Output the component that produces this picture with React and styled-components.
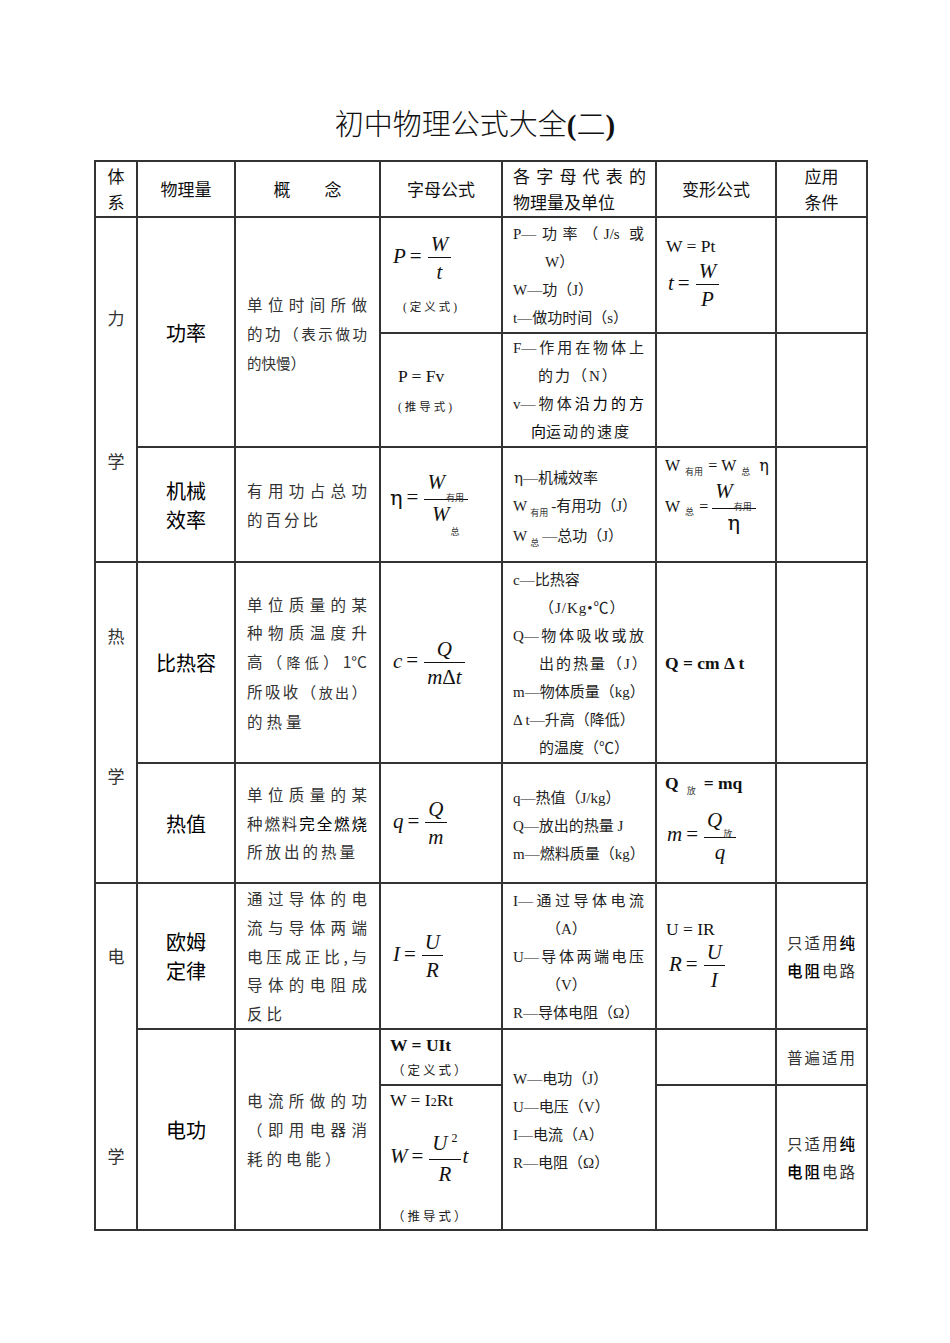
import React from 'react';
import styled, { createGlobalStyle } from 'styled-components';

const GlobalStyle = createGlobalStyle`
  html, body { margin: 0; padding: 0; background: #fff; }
  body { font-family: "Liberation Serif", "Noto Sans CJK SC", serif; color: #222; }
`;

const Page = styled.div`
  width: 950px;
  min-height: 1343px;
  padding-top: 105px;
  box-sizing: border-box;
`;

const Title = styled.h1`
  margin: 0 0 15px 0;
  text-align: center;
  font-family: "Liberation Serif", "Noto Sans CJK SC", serif;
  font-weight: 300;
  font-size: 29px;
  line-height: 40px;
  color: #111;
`;

const Paren = styled.span`
  font-weight: bold;
`;

const Table = styled.table`
  margin-left: 94px;
  width: 772px;
  border-collapse: collapse;
  table-layout: fixed;
`;

const Col = styled.col`
  width: ${p => p.$w}px;
`;

const Row = styled.tr`
  height: ${p => p.$h}px;
`;

const Cell = styled.td`
  border: 2px solid #333;
  padding: ${p => p.$pt || 0}px ${p => (p.$pr ?? p.$pad ?? 10)}px ${p => p.$pb || 0}px ${p => p.$pad ?? 10}px;
  vertical-align: middle;
  text-align: ${p => p.$align || 'left'};
`;

const HeadCell = styled(Cell)`
  font-family: "Noto Sans CJK SC", sans-serif;
  font-size: 17px;
  line-height: 26px;
  color: #111;
`;

const HeadLine = styled.div`
  text-align: ${p => (p.$justify ? 'justify' : 'inherit')};
  text-align-last: ${p => (p.$justify ? 'justify' : 'auto')};
`;

const SysCell = styled(Cell)`
  padding: 0;
`;

const Sys = styled.div`
  display: flex;
  flex-direction: column;
  align-items: center;
  gap: ${p => p.$gap}px;
  padding-bottom: ${p => p.$shift || 0}px;
  font-family: "Noto Sans CJK SC", sans-serif;
  font-size: 17px;
  line-height: 20px;
  color: #333;
`;

const QtyCell = styled(Cell)`
  text-align: center;
  font-family: "Noto Sans CJK SC", sans-serif;
  font-size: 20px;
  line-height: 29px;
  color: #000;
`;

const ConceptCell = styled(Cell)`
  font-family: "Noto Sans CJK SC", sans-serif;
  font-size: 15.5px;
  line-height: 28.8px;
  color: #333;
`;

const CLine = styled.div`
  white-space: nowrap;
  text-align: ${p => (p.$justify ? 'justify' : 'left')};
  text-align-last: ${p => (p.$justify ? 'justify' : 'auto')};
  letter-spacing: ${p => (p.$justify ? 0 : p.$ls ?? 4)}px;
`;

const Dark = styled.span`
  color: #000;
  letter-spacing: 0;
`;

const Small = styled.span`
  font-size: ${p => p.$size || 13}px;
  letter-spacing: 0;
`;

const SymCell = styled(Cell)`
  font-family: "Liberation Serif", "Noto Sans CJK SC", serif;
  font-size: 15px;
  line-height: 28px;
  color: #222;
`;

const SLine = styled.div`
  white-space: nowrap;
  padding-left: ${p => p.$indent || 0}px;
  text-align: ${p => (p.$justify ? 'justify' : 'left')};
  text-align-last: ${p => (p.$justify ? 'justify' : 'auto')};
  letter-spacing: ${p => p.$ls || 0}px;
`;

const FormulaCell = styled(Cell)`
  font-family: "Liberation Serif", serif;
  color: #111;
`;

const Stack = styled.div`
  display: flex;
  flex-direction: column;
  align-items: flex-start;
  gap: ${p => p.$gap || 0}px;
`;

const Plain = styled.div`
  font-family: "Liberation Serif", serif;
  font-size: 17.5px;
  line-height: 24px;
  font-weight: ${p => (p.$bold ? 'bold' : 'normal')};
  margin-left: ${p => p.$ml || 0}px;
  margin-top: ${p => p.$mt || 0}px;
  white-space: nowrap;
  color: #111;
`;

const Note = styled.div`
  font-family: "Liberation Serif", "Noto Sans CJK SC", serif;
  font-size: 12.5px;
  line-height: 20px;
  letter-spacing: 3px;
  margin-left: ${p => p.$ml || 0}px;
  margin-top: ${p => p.$mt || 0}px;
  white-space: nowrap;
  color: #222;
`;

const Math = styled.div`
  font-family: "Liberation Serif", serif;
  font-style: italic;
  font-size: 21px;
  line-height: 24px;
  margin-left: ${p => p.$ml || 0}px;
  margin-top: ${p => p.$mt || 0}px;
  white-space: nowrap;
  color: #111;
`;

const Op = styled.span`
  font-style: normal;
  margin: 0 4px;
`;

const Up = styled.span`
  font-style: normal;
`;

const Frac = styled.span`
  display: inline-flex;
  flex-direction: column;
  align-items: center;
  vertical-align: middle;
  margin: 0 2px;
`;

const Num = styled.span`
  line-height: 22px;
  padding: 0 3px 2px;
  white-space: nowrap;
`;

const Den = styled.span`
  align-self: stretch;
  text-align: center;
  line-height: 22px;
  padding: 3px 3px 0;
  border-top: 1.3px solid #111;
  white-space: nowrap;
`;

const Sub = styled.span`
  font-family: "Noto Sans CJK SC", sans-serif;
  font-style: normal;
  font-weight: normal;
  font-size: ${p => p.$size || 9}px;
  position: relative;
  top: ${p => p.$dy ?? 6}px;
  margin: 0 ${p => p.$mx ?? 3}px;
  color: #333;
`;

const Sup = styled.span`
  font-style: normal;
  font-size: 12px;
  position: relative;
  top: -8px;
  margin-left: 4px;
`;

const Eta = styled.span`
  font-style: normal;
  font-family: "DejaVu Serif", "Liberation Serif", serif;
`;

const VarCell = styled(Cell)`
  font-family: "Liberation Serif", serif;
  color: #111;
`;

const AppCell = styled(Cell)`
  font-family: "Noto Sans CJK SC", sans-serif;
  font-size: 15.5px;
  line-height: 28px;
  letter-spacing: 2px;
  white-space: nowrap;
  color: #333;
`;

const Strong = styled.span`
  color: #000;
  font-weight: 500;
`;

export default function App() {
  return (
    <Page>
      <GlobalStyle />
      <Title>
        初中物理公式大全<Paren>(</Paren>二<Paren>)</Paren>
      </Title>
      <Table>
        <colgroup>
          <Col $w={42} />
          <Col $w={98} />
          <Col $w={145} />
          <Col $w={122} />
          <Col $w={154} />
          <Col $w={120} />
          <Col $w={91} />
        </colgroup>
        <tbody>
          <Row $h={56}>
            <HeadCell $align="center" $pad={0}>
              <div>体</div>
              <div>系</div>
            </HeadCell>
            <HeadCell $align="center">物理量</HeadCell>
            <HeadCell $align="center">概　　念</HeadCell>
            <HeadCell $align="center">字母公式</HeadCell>
            <HeadCell $pad={10} $pr={9}>
              <HeadLine $justify>各字母代表的</HeadLine>
              <HeadLine>物理量及单位</HeadLine>
            </HeadCell>
            <HeadCell $align="center">变形公式</HeadCell>
            <HeadCell $align="center">
              <div>应用</div>
              <div>条件</div>
            </HeadCell>
          </Row>

          {/* 功率 - 定义式 */}
          <Row $h={116}>
            <SysCell rowSpan={3}>
              <Sys $gap={123}>
                <span>力</span>
                <span>学</span>
              </Sys>
            </SysCell>
            <QtyCell rowSpan={2}>功率</QtyCell>
            <ConceptCell rowSpan={2} $pad={11} $pr={12} $pt={4}>
              <CLine $justify>单位时间所做</CLine>
              <CLine $justify>
                的功（<Small $size={14.5}>表示做功</Small>
              </CLine>
              <CLine $ls={0}>
                <Small $size={14.5}>的快慢</Small>）
              </CLine>
            </ConceptCell>
            <FormulaCell $pad={12}>
              <Stack $gap={14}>
                <Math>
                  P<Op>=</Op>
                  <Frac>
                    <Num>W</Num>
                    <Den>t</Den>
                  </Frac>
                </Math>
                <Note $ml={10} style={{ fontSize: '11.5px' }}>
                  (定义式)
                </Note>
              </Stack>
            </FormulaCell>
            <SymCell $pad={10} $pr={11} $pt={2}>
              <SLine $justify>P—功率（J/s 或</SLine>
              <SLine $indent={32}>W）</SLine>
              <SLine>W—功（J）</SLine>
              <SLine>t—做功时间（s）</SLine>
            </SymCell>
            <VarCell $pad={9} $pb={6}>
              <Stack $gap={2}>
                <Plain>W = Pt</Plain>
                <Math $ml={2}>
                  t<Op>=</Op>
                  <Frac>
                    <Num>W</Num>
                    <Den>P</Den>
                  </Frac>
                </Math>
              </Stack>
            </VarCell>
            <AppCell />
          </Row>

          {/* 功率 - 推导式 */}
          <Row $h={114}>
            <FormulaCell $pad={17}>
              <Stack $gap={9}>
                <Plain>P = Fv</Plain>
                <Note $ml={0} style={{ fontSize: '11.5px' }}>
                  (推导式)
                </Note>
              </Stack>
            </FormulaCell>
            <SymCell $pad={10} $pr={11}>
              <SLine $justify>F—作用在物体上</SLine>
              <SLine $indent={25} $ls={2}>的力（N）</SLine>
              <SLine $justify>
                v—物体<Dark>沿力的方</Dark>
              </SLine>
              <SLine $indent={18} $ls={2}>
                <Dark>向</Dark>运动的速度
              </SLine>
            </SymCell>
            <VarCell />
            <AppCell />
          </Row>

          {/* 机械效率 */}
          <Row $h={115}>
            <QtyCell>
              <div>机械</div>
              <div>效率</div>
            </QtyCell>
            <ConceptCell $pad={11} $pr={12}>
              <CLine $justify>有用功占总功</CLine>
              <CLine $ls={3}>的百分比</CLine>
            </ConceptCell>
            <FormulaCell $pad={9} $pb={10}>
              <Math>
                <Eta>η</Eta>
                <Op>=</Op>
                <Frac>
                  <Num>
                    W
                    <Sub $dy={12} $mx={1}>
                      有用
                    </Sub>
                  </Num>
                  <Den>
                    W
                    <Sub $dy={14} $mx={1}>
                      总
                    </Sub>
                  </Den>
                </Frac>
              </Math>
            </FormulaCell>
            <SymCell $pad={11} $pt={7}>
              <SLine>
                <Eta>η</Eta>—机械效率
              </SLine>
              <SLine style={{ marginLeft: '-1px' }}>
                W<Sub $dy={5}>有用</Sub>-有用功（J）
              </SLine>
              <SLine style={{ marginLeft: '-1px' }}>
                W<Sub $dy={5}>总</Sub>—总功（J）
              </SLine>
            </SymCell>
            <VarCell $pad={8} $pb={22}>
              <Stack $gap={0}>
                <Plain style={{ fontSize: '16px' }}>
                  W<Sub $dy={4} $mx={5}>有用</Sub>= W<Sub $dy={4} $mx={5}>总</Sub> <Eta>η</Eta>
                </Plain>
                <Plain style={{ fontSize: '16px' }}>
                  W<Sub $dy={4} $mx={5}>总</Sub>=
                  <Math as="span" style={{ fontSize: '21px' }}>
                    <Frac style={{ marginLeft: '4px' }}>
                      <Num>
                        W
                        <Sub $dy={12} $mx={1}>
                          有用
                        </Sub>
                      </Num>
                      <Den>
                        <Eta>η</Eta>
                      </Den>
                    </Frac>
                  </Math>
                </Plain>
              </Stack>
            </VarCell>
            <AppCell />
          </Row>

          {/* 比热容 */}
          <Row $h={201}>
            <SysCell rowSpan={2}>
              <Sys $gap={120} $shift={34}>
                <span>热</span>
                <span>学</span>
              </Sys>
            </SysCell>
            <QtyCell>比热容</QtyCell>
            <ConceptCell $pad={11} $pr={12}>
              <CLine $justify>单位质量的某</CLine>
              <CLine $justify>种物质温度升</CLine>
              <CLine $justify>
                高（<Small $size={14}>降低</Small>）1°C
              </CLine>
              <CLine $justify>
                所吸收（<Small $size={14}>放出</Small>）
              </CLine>
              <CLine>的热量</CLine>
            </ConceptCell>
            <FormulaCell $pad={12}>
              <Math>
                c<Op>=</Op>
                <Frac>
                  <Num>Q</Num>
                  <Den>
                    m<Up>Δ</Up>t
                  </Den>
                </Frac>
              </Math>
            </FormulaCell>
            <SymCell $pad={10} $pr={11} $pt={2}>
              <SLine>c—比热容</SLine>
              <SLine $indent={26} $ls={1}>
                （J/Kg•℃）
              </SLine>
              <SLine $justify>Q—物体吸收或放</SLine>
              <SLine $indent={26} $ls={2}>
                出的热量（J）
              </SLine>
              <SLine>m—物体质量（kg）</SLine>
              <SLine>Δ t—升高（降低）</SLine>
              <SLine $indent={26}>的温度（℃）</SLine>
            </SymCell>
            <VarCell $pad={8}>
              <Plain $bold>Q = cm Δ t</Plain>
            </VarCell>
            <AppCell />
          </Row>

          {/* 热值 */}
          <Row $h={120}>
            <QtyCell>热值</QtyCell>
            <ConceptCell $pad={11} $pr={12}>
              <CLine $justify>单位质量的某</CLine>
              <CLine $justify>
                种燃料<Dark>完全燃烧</Dark>
              </CLine>
              <CLine $ls={3}>所放出的热量</CLine>
            </ConceptCell>
            <FormulaCell $pad={12}>
              <Math>
                q<Op>=</Op>
                <Frac>
                  <Num>Q</Num>
                  <Den>m</Den>
                </Frac>
              </Math>
            </FormulaCell>
            <SymCell $pad={10} $pt={6}>
              <SLine>q—热值（J/kg）</SLine>
              <SLine>Q—放出的热量 J</SLine>
              <SLine>m—燃料质量（kg）</SLine>
            </SymCell>
            <VarCell $pad={8} $pb={12}>
              <Stack $gap={11}>
                <Plain $bold>
                  Q<Sub $dy={5} $mx={8}>放</Sub>= mq
                </Plain>
                <Math $ml={2}>
                  m<Op>=</Op>
                  <Frac>
                    <Num>
                      Q
                      <Sub $dy={10} $mx={1}>
                        放
                      </Sub>
                    </Num>
                    <Den>q</Den>
                  </Frac>
                </Math>
              </Stack>
            </VarCell>
            <AppCell />
          </Row>

          {/* 欧姆定律 */}
          <Row $h={144}>
            <SysCell rowSpan={3}>
              <Sys $gap={180}>
                <span>电</span>
                <span>学</span>
              </Sys>
            </SysCell>
            <QtyCell>
              <div>欧姆</div>
              <div>定律</div>
            </QtyCell>
            <ConceptCell $pad={11} $pr={12}>
              <CLine $justify>通过导体的电</CLine>
              <CLine $justify>流与导体两端</CLine>
              <CLine $justify>电压成正比,与</CLine>
              <CLine $justify>导体的电阻成</CLine>
              <CLine>反比</CLine>
            </ConceptCell>
            <FormulaCell $pad={12}>
              <Math>
                I<Op>=</Op>
                <Frac>
                  <Num>U</Num>
                  <Den>R</Den>
                </Frac>
              </Math>
            </FormulaCell>
            <SymCell $pad={10} $pr={11} $pt={2}>
              <SLine $justify>I—通过导体电流</SLine>
              <SLine $indent={33}>（A）</SLine>
              <SLine $justify>U—导体两端电压</SLine>
              <SLine $indent={33}>（V）</SLine>
              <SLine>R—导体电阻（Ω）</SLine>
            </SymCell>
            <VarCell $pad={9} $pb={4}>
              <Stack $gap={0}>
                <Plain>U = IR</Plain>
                <Math $ml={3}>
                  R<Op>=</Op>
                  <Frac>
                    <Num>U</Num>
                    <Den>I</Den>
                  </Frac>
                </Math>
              </Stack>
            </VarCell>
            <AppCell>
              <div>
                只适用<Strong>纯</Strong>
              </div>
              <div>
                <Strong>电阻</Strong>电路
              </div>
            </AppCell>
          </Row>

          {/* 电功 - 定义式 */}
          <Row $h={56}>
            <QtyCell rowSpan={2}>电功</QtyCell>
            <ConceptCell rowSpan={2} $pad={11} $pr={12}>
              <CLine $justify>电流所做的功</CLine>
              <CLine $justify>（即用电器消</CLine>
              <CLine>耗的电能）</CLine>
            </ConceptCell>
            <FormulaCell $pad={9}>
              <Stack $gap={4}>
                <Plain $bold>W = UIt</Plain>
                <Note $ml={2}>（定义式）</Note>
              </Stack>
            </FormulaCell>
            <SymCell rowSpan={2} $pad={10}>
              <div style={{ paddingBottom: '16px' }}>
                <SLine>W—电功（J）</SLine>
                <SLine>U—电压（V）</SLine>
                <SLine>I—电流（A）</SLine>
                <SLine>R—电阻（Ω）</SLine>
              </div>
            </SymCell>
            <VarCell />
            <AppCell>普遍适用</AppCell>
          </Row>

          {/* 电功 - 推导式 */}
          <Row $h={145}>
            <FormulaCell $pad={9}>
              <Stack $gap={0}>
                <Plain>
                  W = I<Small $size={12}>2</Small>Rt
                </Plain>
                <Math $mt={18}>
                  W<Op>=</Op>
                  <Frac>
                    <Num>
                      U<Sup>2</Sup>
                    </Num>
                    <Den>R</Den>
                  </Frac>
                  t
                </Math>
                <Note $ml={2} $mt={22}>（推导式）</Note>
              </Stack>
            </FormulaCell>
            <VarCell />
            <AppCell>
              <div>
                只适用<Strong>纯</Strong>
              </div>
              <div>
                <Strong>电阻</Strong>电路
              </div>
            </AppCell>
          </Row>
        </tbody>
      </Table>
    </Page>
  );
}
